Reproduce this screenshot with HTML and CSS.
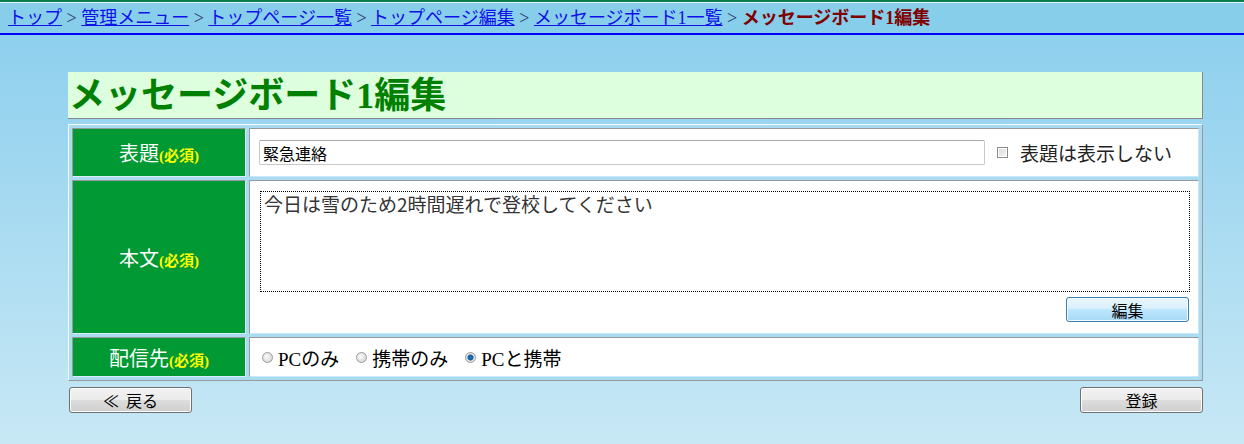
FILE: index.html
```html
<!DOCTYPE html>
<html lang="ja">
<head>
  <meta charset="UTF-8" />
  <title>メッセージボード1編集</title>
  <link rel="stylesheet" href="styles.css">
</head>
<body>
  <!-- パンくず -->
  <div class="crumbs">
    <a href="#">トップ</a> &gt; <a href="#">管理メニュー</a> &gt; <a href="#">トップページ一覧</a> &gt; <a href="#">トップページ編集</a> &gt; <a href="#">メッセージボード1一覧</a> &gt; <span class="current">メッセージボード1編集</span>
  </div>

  <div class="wrap">
    <h1 class="title">メッセージボード1編集</h1>

    <table class="form">
      <tr class="row-title">
        <th>表題<span class="req">(必須)</span></th>
        <td>
          <div class="line">
            <input class="subject" type="text" value="緊急連絡" />
            <label class="check"><input type="checkbox" /> 表題は表示しない</label>
          </div>
        </td>
      </tr>
      <tr class="row-body">
        <th>本文<span class="req">(必須)</span></th>
        <td>
          <textarea class="body-text">今日は雪のため2時間遅れで登校してください</textarea>
          <div class="edit-line"><button class="btn-blue">編集</button></div>
        </td>
      </tr>
      <tr class="row-dest">
        <th>配信先<span class="req">(必須)</span></th>
        <td>
          <label class="radio"><input type="radio" name="dest" /> PCのみ</label>
          <label class="radio"><input type="radio" name="dest" /> 携帯のみ</label>
          <label class="radio"><input type="radio" name="dest" checked /> PCと携帯</label>
        </td>
      </tr>
    </table>

    <div class="actions">
      <button class="btn-gray">≪&nbsp;&nbsp;戻る</button>
      <button class="btn-gray">登録</button>
    </div>
  </div>
</body>
</html>
```

FILE: styles.css
```css
html {
  background: #c8e8f5;
}
body {
  margin: 0;
  padding: 0;
  height: 444px;
  font-family: 'Liberation Serif', 'Noto Sans CJK JP', serif;
  background: linear-gradient(#87cdee 0px, #8fd0ee 40px, #c8e8f5 444px);
  border-top: 2px solid #0a7d50;
}
.crumbs {
  border-top: 1px solid #e8f6fb;
  background: #87ceeb;
  height: 30px;
  line-height: 30px;
  padding-left: 8px;
  font-size: 18px;
  color: #333366;
  border-bottom: 2px solid #0000ff;
  white-space: nowrap;
}
.crumbs a {
  color: #1010e8;
  text-decoration: underline;
}
.crumbs .current {
  color: #800000;
  font-weight: bold;
}
.wrap {
  width: 1135px;
  margin: 37px 0 0 68px;
}
.title {
  margin: 0;
  height: 46px;
  line-height: 48px;
  padding-left: 1px;
  background: #ddffdd;
  border-right: 1px solid #888;
  border-bottom: 1px solid #888;
  color: #008000;
  font-size: 36px;
  font-weight: bold;
  white-space: nowrap;
}
.form {
  margin-top: 5px;
  width: 1135px;
  border-collapse: separate;
  border-spacing: 3px;
  background: #a9dcf0;
  border: 1px solid;
  border-color: #f4fbfe #999 #999 #f4fbfe;
  table-layout: fixed;
}
.form th {
  width: 172px;
  background: #009933;
  color: #fff;
  font-size: 20px;
  font-weight: normal;
  border: 1px solid;
  border-color: #999 #d8eef8 #d8eef8 #999;
  padding: 0;
  text-align: center;
  vertical-align: middle;
}
.form td {
  background: #fff;
  border: 1px solid;
  border-color: #999 #c6e8f7 #c6e8f7 #999;
  padding: 0 0 0 9px;
  vertical-align: top;
}
.req {
  color: #ffff00;
  font-size: 15px;
  font-weight: bold;
}
.row-title th, .row-title td { height: 47px; }
.row-body th, .row-body td { height: 152px; }
.row-dest th, .row-dest td { height: 38px; }

.line {
  display: flex;
  align-items: center;
  height: 47px;
}
.subject {
  box-sizing: border-box;
  width: 726px;
  height: 25px;
  margin: 0;
  padding: 0 3px;
  border: 1px solid #c8c8c8;
  border-top-color: #a9a9a9;
  border-radius: 2px;
  font-family: 'Noto Sans CJK JP', sans-serif;
  font-size: 16px;
  color: #000;
}
.check {
  display: flex;
  align-items: center;
  margin-left: 12px;
  font-family: 'Noto Sans CJK JP', sans-serif;
  font-size: 19px;
  color: #222;
}
.check input {
  appearance: none;
  width: 11px;
  height: 11px;
  margin: 0 12px 0 0;
  border: 1px solid #8a8a8a;
  background: linear-gradient(135deg, #d8d8d8, #f6f6f6);
  box-shadow: inset 0 0 0 1px #fff;
}
.body-text {
  display: block;
  box-sizing: border-box;
  width: 930px;
  height: 101px;
  margin: 10px 0 0 1px;
  padding: 1px 3px;
  border: 1px dotted #000;
  resize: none;
  font-family: 'Noto Sans CJK JP', sans-serif;
  font-size: 19px;
  line-height: 21px;
  color: #333;
}
.edit-line {
  display: flex;
  justify-content: flex-end;
  width: 930px;
  margin-top: 5px;
}
.btn-blue, .btn-gray {
  box-sizing: border-box;
  width: 123px;
  height: 25px;
  padding: 0;
  font-family: 'Noto Sans CJK JP', sans-serif;
  font-size: 16px;
  line-height: 22px;
  color: #000;
  border-radius: 3px;
}
.btn-blue {
  border: 1px solid #3c7fb1;
  background: linear-gradient(#eaf6fd 0%, #d9f0fc 45%, #bee6fd 50%, #a7d9f5 100%);
  box-shadow: inset 0 0 0 1px #f0f9ff;
}
.radio {
  display: inline-flex;
  align-items: center;
  height: 38px;
  margin-right: 13px;
  font-size: 19px;
  color: #000;
}
.radio:first-child { margin-left: 3px; }
.radio input {
  appearance: none;
  width: 11px;
  height: 11px;
  margin: 0 5px 0 0;
  border-radius: 50%;
  border: 1px solid #9a9a9a;
  background: radial-gradient(circle at 40% 40%, #fafafa, #cfcfcf);
}
.radio input:checked {
  background: radial-gradient(circle, #1f7fc8 0, #125a99 2.5px, #e9e9e9 3.5px, #cfcfcf 100%);
}
.actions {
  display: flex;
  justify-content: space-between;
  margin-top: 6px;
  padding-left: 1px;
}
.btn-gray {
  height: 26px;
  border: 1px solid #707070;
  background: linear-gradient(#f2f2f2 0%, #ebebeb 50%, #dddddd 50%, #cfcfcf 100%);
  box-shadow: inset 0 0 0 1px #fcfcfc;
}
```
